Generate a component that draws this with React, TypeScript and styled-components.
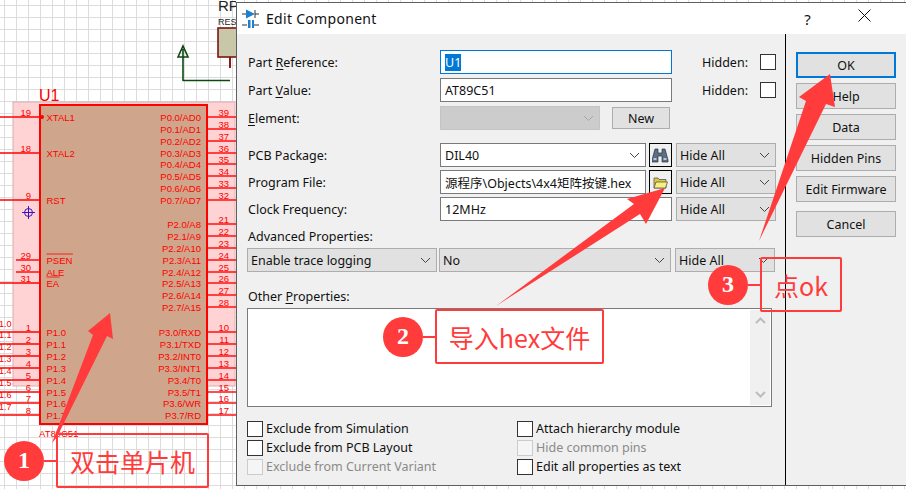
import React from 'react'
import styled, { createGlobalStyle } from 'styled-components'

const RED = '#ff0000'
const NOTE = '#ff3b3b'
const UI_FONT = `'Noto Sans', 'Noto Sans CJK SC', sans-serif`

const GlobalStyle = createGlobalStyle`
  html, body {
    margin: 0;
    padding: 0;
    background: #fff;
  }
`

const Page = styled.div`
  position: relative;
  width: 906px;
  height: 489px;
  overflow: hidden;
  background-color: #fff;
  background-image:
    linear-gradient(#dcdcdc 1px, transparent 1px),
    linear-gradient(90deg, #dcdcdc 1px, transparent 1px);
  background-size: 12px 12px;
  background-position: 4px 5px;
  font-family: ${UI_FONT};
`

const Schematic = styled.svg`
  position: absolute;
  left: 0;
  top: 0;
`

const Dialog = styled.div`
  position: absolute;
  left: 236px;
  top: 2px;
  width: 672px;
  height: 484px;
  display: flex;
  flex-direction: column;
  background: #f0f0f0;
  border: 1px solid #5f5f5f;
  box-sizing: border-box;
  font-size: 12.5px;
  color: #111;
`

const TitleBar = styled.div`
  height: 31px;
  flex: none;
  display: flex;
  align-items: center;
  background: #fff;
  padding-left: 5px;
`

const Title = styled.div`
  margin-left: 7px;
  font-size: 14px;
  letter-spacing: 0.3px;
  flex: 1;
`

const WindowButton = styled.div`
  width: 57px;
  display: flex;
  justify-content: center;
  font-size: 15px;
`

const TitleActions = styled.div`
  display: flex;
  margin-right: 14px;
`

const Body = styled.div`
  flex: 1;
  display: flex;
`

const MainColumn = styled.div`
  width: 549px;
  flex: none;
  box-sizing: border-box;
  padding: 16px 14px 0 10px;
  display: flex;
  flex-direction: column;
  border-right: 1px solid #000;
`

const Side = styled.div`
  flex: 1;
  padding: 18px 0 0 10px;
  display: flex;
  flex-direction: column;
`

const Row = styled.div<{ $mt?: number }>`
  height: 24px;
  display: flex;
  align-items: center;
  margin-top: ${p => p.$mt ?? 4}px;
`

const Label = styled.label`
  width: 192px;
  flex: none;
  padding-left: 1px;
  u { text-underline-offset: 2px; }
`

const Field = styled.div<{ $w: number; $disabled?: boolean; $active?: boolean }>`
  width: ${p => p.$w}px;
  height: 24px;
  box-sizing: border-box;
  flex: none;
  display: flex;
  align-items: center;
  padding-left: 4px;
  overflow: hidden;
  white-space: nowrap;
  background: ${p => (p.$disabled ? '#cccccc' : '#fff')};
  border: 1px solid ${p => (p.$active ? '#0078d7' : p.$disabled ? '#c4c4c4' : '#7a7a7a')};
`

const Selected = styled.span`
  background: #0078d7;
  color: #fff;
`

const DropField = styled(Field)`
  position: relative;
  padding-right: 20px;
`

const Select = styled.div<{ $w: number; $ml?: number }>`
  width: ${p => p.$w}px;
  height: 24px;
  box-sizing: border-box;
  flex: none;
  margin-left: ${p => p.$ml ?? 0}px;
  position: relative;
  display: flex;
  align-items: center;
  padding-left: 3px;
  background: #e1e1e1;
  border: 1px solid #adadad;
`

const Chevron = styled.svg<{ $light?: boolean }>`
  position: absolute;
  right: 5px;
  top: 8px;
  stroke: ${p => (p.$light ? '#a8a8a8' : '#444')};
  fill: none;
`

const IconButton = styled.div`
  width: 23px;
  height: 24px;
  flex: none;
  margin-left: 3px;
  box-sizing: border-box;
  border: 1px solid #000;
  background: #f0f0f0;
  display: flex;
  align-items: center;
  justify-content: center;
`

const HiddenLabel = styled.span`
  margin-left: 30px;
  width: 58px;
  flex: none;
`

const CheckBox = styled.div<{ $disabled?: boolean }>`
  width: 16px;
  height: 16px;
  box-sizing: border-box;
  flex: none;
  background: ${p => (p.$disabled ? '#f5f5f5' : '#fff')};
  border: 1px solid ${p => (p.$disabled ? '#cccccc' : '#333')};
`

const NewButton = styled.div`
  width: 58px;
  height: 22px;
  margin-left: 12px;
  box-sizing: border-box;
  background: #e1e1e1;
  border: 1px solid #adadad;
  display: flex;
  align-items: center;
  justify-content: center;
`

const SectionLabel = styled.div<{ $mt: number }>`
  margin-top: ${p => p.$mt}px;
  height: 17px;
  line-height: 17px;
  padding-left: 1px;
  u { text-underline-offset: 2px; }
`

const TextArea = styled.div`
  position: relative;
  margin-top: 3px;
  height: 99px;
  width: 525px;
  box-sizing: border-box;
  background: #fff;
  border: 1px solid #7a7a7a;
`

const ScrollBar = styled.div`
  position: absolute;
  right: 1px;
  top: 1px;
  bottom: 1px;
  width: 20px;
  background: #f0f0f0;
  display: flex;
  flex-direction: column;
  justify-content: space-between;
  align-items: center;
  padding: 7px 0;
  box-sizing: border-box;
`

const OptionGrid = styled.div`
  margin-top: 12px;
  display: grid;
  grid-template-columns: 270px 1fr;
  grid-auto-rows: 19px;
`

const Option = styled.div<{ $disabled?: boolean }>`
  display: flex;
  align-items: center;
  gap: 3px;
  white-space: nowrap;
  color: ${p => (p.$disabled ? '#8a8a8a' : '#111')};
`

const SideButton = styled.div<{ $mt?: number; $primary?: boolean }>`
  width: 100px;
  height: ${p => (p.$primary ? 26 : 26)}px;
  margin-top: ${p => p.$mt ?? 5}px;
  box-sizing: border-box;
  background: #e1e1e1;
  border: ${p => (p.$primary ? '2px solid #0078d7' : '1px solid #adadad')};
  display: flex;
  align-items: center;
  justify-content: center;
`

const Overlay = styled.svg`
  position: absolute;
  left: 0;
  top: 0;
  pointer-events: none;
`

const Callout = styled.div<{ $x: number; $y: number; $h: number }>`
  position: absolute;
  left: ${p => p.$x}px;
  top: ${p => p.$y}px;
  height: ${p => p.$h}px;
  display: flex;
  align-items: center;
`

const Badge = styled.div`
  width: 40px;
  height: 40px;
  flex: none;
  border-radius: 50%;
  background: ${NOTE};
  color: #fff;
  display: flex;
  align-items: center;
  justify-content: center;
  font-family: 'Liberation Serif', serif;
  font-weight: bold;
  font-size: 24px;
`

const Connector = styled.div`
  width: 12px;
  height: 2px;
  flex: none;
  background: ${NOTE};
`

const NoteBox = styled.div<{ $w: number }>`
  width: ${p => p.$w}px;
  height: 100%;
  box-sizing: border-box;
  border: 2px solid ${NOTE};
  border-radius: 2px;
  color: ${NOTE};
  font-size: 25px;
  display: flex;
  align-items: center;
  justify-content: center;
  white-space: nowrap;
  font-family: 'Noto Sans CJK SC', 'Noto Sans', sans-serif;
`

type Pin = { num: string; y: number; label: string; bar?: string }

const leftPins: Pin[] = [
  { num: '19', y: 117, label: 'XTAL1' },
  { num: '18', y: 153, label: 'XTAL2' },
  { num: '9', y: 200, label: 'RST' },
  { num: '29', y: 260, label: 'PSEN', bar: 'all' },
  { num: '30', y: 272, label: 'ALE' },
  { num: '31', y: 283, label: 'EA', bar: 'all' },
  { num: '1', y: 332, label: 'P1.0' },
  { num: '2', y: 344, label: 'P1.1' },
  { num: '3', y: 356, label: 'P1.2' },
  { num: '4', y: 368, label: 'P1.3' },
  { num: '5', y: 380, label: 'P1.4' },
  { num: '6', y: 392, label: 'P1.5' },
  { num: '7', y: 403, label: 'P1.6' },
  { num: '8', y: 415, label: 'P1.7' },
]

const rightPins: Pin[] = [
  { num: '39', y: 117, label: 'P0.0/AD0' },
  { num: '38', y: 129, label: 'P0.1/AD1' },
  { num: '37', y: 141, label: 'P0.2/AD2' },
  { num: '36', y: 153, label: 'P0.3/AD3' },
  { num: '35', y: 164, label: 'P0.4/AD4' },
  { num: '34', y: 176, label: 'P0.5/AD5' },
  { num: '33', y: 188, label: 'P0.6/AD6' },
  { num: '32', y: 200, label: 'P0.7/AD7' },
  { num: '21', y: 224, label: 'P2.0/A8' },
  { num: '22', y: 236, label: 'P2.1/A9' },
  { num: '23', y: 248, label: 'P2.2/A10' },
  { num: '24', y: 260, label: 'P2.3/A11' },
  { num: '25', y: 272, label: 'P2.4/A12' },
  { num: '26', y: 283, label: 'P2.5/A13' },
  { num: '27', y: 295, label: 'P2.6/A14' },
  { num: '28', y: 307, label: 'P2.7/A15' },
  { num: '10', y: 332, label: 'P3.0/RXD' },
  { num: '11', y: 344, label: 'P3.1/TXD' },
  { num: '12', y: 356, label: 'P3.2/INT0' },
  { num: '13', y: 368, label: 'P3.3/INT1' },
  { num: '14', y: 380, label: 'P3.4/T0' },
  { num: '15', y: 392, label: 'P3.5/T1' },
  { num: '16', y: 403, label: 'P3.6/WR' },
  { num: '17', y: 415, label: 'P3.7/RD' },
]

const lineNames = ['1.0', '1.1', '1.2', '1.3', '1.4', '1.5', '1.6', '1.7']

const Chip = () => (
  <Schematic width={236} height={489} fontFamily="'Liberation Sans', sans-serif">
    <rect x={13} y={102} width={222} height={84 + 200 + 0 + 0 + 0 + 0 + 0 + 0} fill="#ffd3d3" stroke="#d8b0b0" />
    <rect x={40} y={105} width={167} height={319} fill="#cfa68b" stroke={RED} strokeWidth={2} />
    <text x={39} y={101} fill={RED} fontSize={16}>U1</text>
    <text x={39} y={437} fill={RED} fontSize={9.5}>AT89C51</text>
    {leftPins.map(p => (
      <g key={p.num} fill={RED} fontSize={9.5}>
        <line x1={p.y < 250 || p.num === '31' || p.y > 320 ? 0 : 16} x2={40} y1={p.y} y2={p.y} stroke={RED} strokeWidth={1.4} />
        <text x={31} y={p.y - 1.5} fontSize={9.5} textAnchor="end">{p.num}</text>
        <text x={46.5} y={p.y + 3.5}>{p.label}</text>
        {p.bar && <line x1={46.5} x2={46.5 + p.label.length * 6.6} y1={p.y - 6} y2={p.y - 6} stroke={RED} strokeWidth={0.8} />}
      </g>
    ))}
    {rightPins.map(p => (
      <g key={p.num} fill={RED} fontSize={9.5}>
        <line x1={207} x2={236} y1={p.y} y2={p.y} stroke={RED} strokeWidth={1.4} />
        <text x={229} y={p.y - 1.5} textAnchor="end">{p.num}</text>
        <text x={201} y={p.y + 3.5} textAnchor="end">{p.label}</text>
      </g>
    ))}
    {lineNames.map((n, i) => (
      <text key={n} x={-1} y={[327, 338, 350, 362, 374, 386, 398, 410][i] + 0} fill={RED} fontSize={9}>{n}</text>
    ))}
    <circle cx={42} cy={117} r={2} fill={RED} />
    <g stroke="#3a10c8" fill="none">
      <circle cx={28.5} cy={212.5} r={4} />
      <line x1={22} x2={35} y1={212.5} y2={212.5} />
      <line x1={28.5} x2={28.5} y1={206} y2={219} />
    </g>
    <path d="M183 81V49M178 57L183 46L188 57Z" fill="none" stroke="#0d4a12" strokeWidth={1.6} />
    <path d="M183 80.5H230" stroke="#0d4a12" strokeWidth={1.6} />
    <path d="M230 57V68" stroke="#8c1c1c" strokeWidth={2} />
    <rect x={218} y={28} width={22} height={29} fill="#c8c8a8" stroke="#7c1414" strokeWidth={1.6} />
    <text x={218} y={11} fontSize={15} fill="#222">RP</text>
    <text x={218} y={25} fontSize={9} fill="#222">RES</text>
  </Schematic>
)

const ChevronDown = ({ light }: { light?: boolean }) => (
  <Chevron $light={light} width={11} height={7} viewBox="0 0 11 7">
    <path d="M1 1l4.5 4.5L10 1" />
  </Chevron>
)

const TitleIcon = () => (
  <svg width={17} height={21} viewBox="0 0 17 21">
    <path d="M0 6h4M13 6h4M0 17h5M12 17h5M13 2v8" stroke="#333" fill="none" />
    <path d="M4 1.5v9L13 6z" fill="#1c7fd0" />
    <path d="M6 12v8h2.5v-8zM10 12v8h2v-8z" fill="#1c7fd0" />
  </svg>
)

const Binoculars = () => (
  <svg width={17} height={15} viewBox="0 0 17 15">
    <path d="M3 1h3v4h4V1h3l3 11v2h-6V8H6v6H0v-2z" fill="#5c6f86" stroke="#22303e" strokeWidth={0.7} />
    <path d="M1.5 10h3v2h-3zM11.5 10h3v2h-3z" fill="#b9c8d8" />
  </svg>
)

const FolderIcon = () => (
  <svg width={15} height={13} viewBox="0 0 15 13">
    <path d="M1 12V2h4l1 1.5h7V12z" fill="#e0c83a" stroke="#555" strokeWidth={0.8} />
    <path d="M1 12l2-6h11.5l-2 6z" fill="#f8f07e" stroke="#555" strokeWidth={0.8} />
  </svg>
)

const Arrows = () => (
  <Overlay width={906} height={489}>
    <g fill={NOTE}>
      <path d="M52 443L93 335L88 331L110 313L113 339L107 336L57 437Z" />
      <path d="M496 306L634 204L627 199L665 188L646 224L640 214Z" />
      <path d="M759 241L806 101L799 97L830 74L835 107L826 104Z" />
    </g>
  </Overlay>
)

const App = () => (
  <Page>
    <GlobalStyle />
    <Chip />
    <Dialog>
      <TitleBar>
        <TitleIcon />
        <Title>Edit Component</Title>
        <TitleActions>
          <WindowButton>?</WindowButton>
          <WindowButton>
            <svg width={13} height={13} viewBox="0 0 13 13">
              <path d="M.5.5l12 12M12.5.5l-12 12" stroke="#111" fill="none" />
            </svg>
          </WindowButton>
        </TitleActions>
      </TitleBar>
      <Body>
        <MainColumn>
          <Row $mt={0}>
            <Label>Part <u>R</u>eference:</Label>
            <Field $w={232} $active><Selected>U1</Selected></Field>
            <HiddenLabel>Hidden:</HiddenLabel>
            <CheckBox />
          </Row>
          <Row>
            <Label>Part <u>V</u>alue:</Label>
            <Field $w={232}>AT89C51</Field>
            <HiddenLabel>Hidden:</HiddenLabel>
            <CheckBox />
          </Row>
          <Row>
            <Label><u>E</u>lement:</Label>
            <DropField $w={160} $disabled><ChevronDown light /></DropField>
            <NewButton>New</NewButton>
          </Row>
          <Row $mt={13}>
            <Label>PCB Package:</Label>
            <DropField $w={206}>DIL40<ChevronDown /></DropField>
            <IconButton><Binoculars /></IconButton>
            <Select $w={100} $ml={4}>Hide All<ChevronDown /></Select>
          </Row>
          <Row $mt={3}>
            <Label>Program File:</Label>
            <Field $w={206}>源程序\Objects\4x4矩阵按键.hex</Field>
            <IconButton><FolderIcon /></IconButton>
            <Select $w={100} $ml={4}>Hide All<ChevronDown /></Select>
          </Row>
          <Row $mt={3}>
            <Label>Clock Frequency:</Label>
            <Field $w={232}>12MHz</Field>
            <Select $w={100} $ml={4}>Hide All<ChevronDown /></Select>
          </Row>
          <SectionLabel $mt={7}>Advanced Properties:</SectionLabel>
          <Row $mt={3}>
            <Select $w={190}>Enable trace logging<ChevronDown /></Select>
            <Select $w={232} $ml={2}>No<ChevronDown /></Select>
            <Select $w={100} $ml={4}>Hide All<ChevronDown /></Select>
          </Row>
          <SectionLabel $mt={16}>Other <u>P</u>roperties:</SectionLabel>
          <TextArea>
            <ScrollBar>
              <svg width={11} height={7} viewBox="0 0 11 7"><path d="M1 6l4.5-4.5L10 6" stroke="#bdbdbd" strokeWidth={2} fill="none" /></svg>
              <svg width={11} height={7} viewBox="0 0 11 7"><path d="M1 1l4.5 4.5L10 1" stroke="#bdbdbd" strokeWidth={2} fill="none" /></svg>
            </ScrollBar>
          </TextArea>
          <OptionGrid>
            <Option><CheckBox />Exclude from Simulation</Option>
            <Option><CheckBox />Attach hierarchy module</Option>
            <Option><CheckBox />Exclude from PCB Layout</Option>
            <Option $disabled><CheckBox $disabled />Hide common pins</Option>
            <Option $disabled><CheckBox $disabled />Exclude from Current Variant</Option>
            <Option><CheckBox />Edit all properties as text</Option>
          </OptionGrid>
        </MainColumn>
        <Side>
          <SideButton $primary $mt={0}>OK</SideButton>
          <SideButton>Help</SideButton>
          <SideButton>Data</SideButton>
          <SideButton>Hidden Pins</SideButton>
          <SideButton>Edit Firmware</SideButton>
          <SideButton $mt={9}>Cancel</SideButton>
        </Side>
      </Body>
    </Dialog>
    <Arrows />
    <Callout $x={4} $y={433} $h={55}>
      <Badge>1</Badge>
      <Connector />
      <NoteBox $w={153}>双击单片机</NoteBox>
    </Callout>
    <Callout $x={383} $y={309} $h={55}>
      <Badge>2</Badge>
      <Connector />
      <NoteBox $w={169}>导入hex文件</NoteBox>
    </Callout>
    <Callout $x={708} $y={257} $h={55}>
      <Badge>3</Badge>
      <Connector />
      <NoteBox $w={82}>点ok</NoteBox>
    </Callout>
  </Page>
)

export default App
